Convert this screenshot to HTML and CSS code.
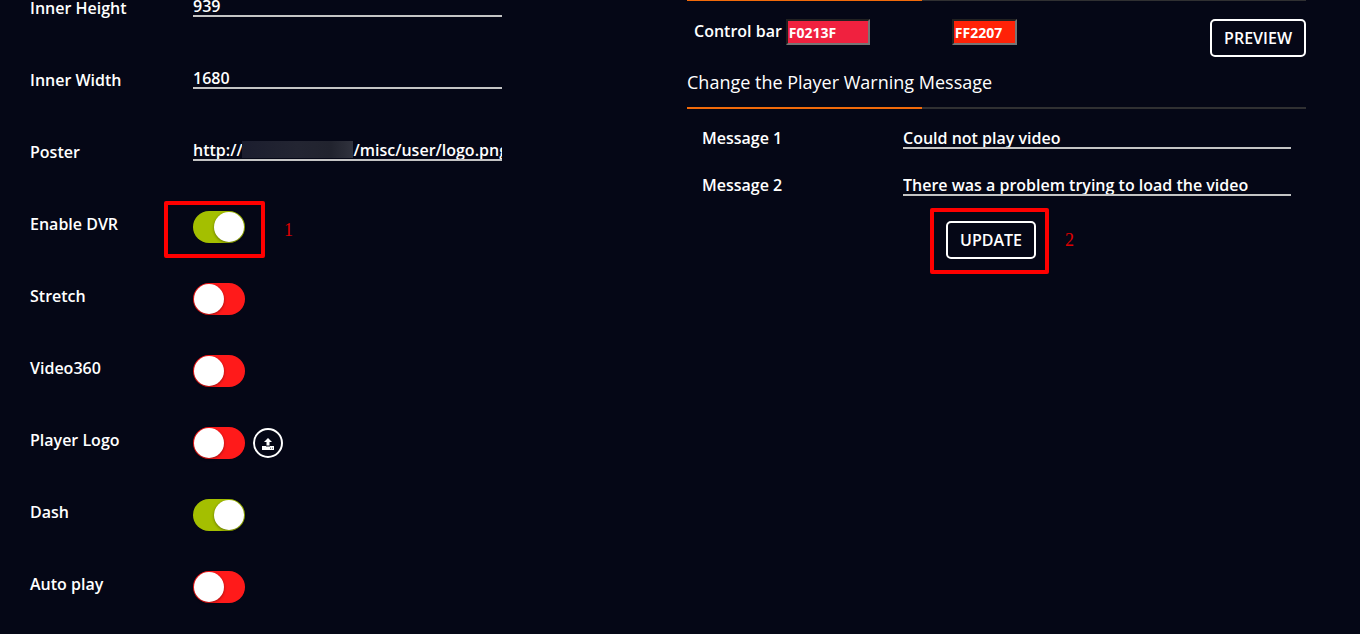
FILE: index.html
```html
<!DOCTYPE html>
<html lang="en">
<head>
    <meta charset="UTF-8">
    <meta name="viewport" content="width=device-width, initial-scale=1.0">
    <title>Player Settings</title>
    <link rel="stylesheet" href="styles.css">
</head>
<body>
    <main class="settings">
        <section class="player-options">
            <div class="option-row">
                <label for="inner-height">Inner Height</label>
                <input class="line-input" type="text" id="inner-height" value="939">
            </div>
            <div class="option-row">
                <label for="inner-width">Inner Width</label>
                <input class="line-input" type="text" id="inner-width" value="1680">
            </div>
            <div class="option-row">
                <label for="poster">Poster</label>
                <div class="poster-field">
                    <input class="line-input" type="text" id="poster" value="http://&nbsp;&nbsp;&nbsp;&nbsp;&nbsp;&nbsp;&nbsp;&nbsp;&nbsp;&nbsp;&nbsp;&nbsp;&nbsp;&nbsp;&nbsp;&nbsp;&nbsp;&nbsp;&nbsp;&nbsp;&nbsp;&nbsp;&nbsp;m/misc/user/logo.png">
                    <span class="masked-host"></span>
                </div>
            </div>
            <div class="option-row">
                <label for="enable-dvr">Enable DVR</label>
                <div class="marked">
                    <input class="switch" type="checkbox" id="enable-dvr" checked>
                    <span class="marker marker-dvr"></span>
                    <span class="step step-dvr">1</span>
                </div>
            </div>
            <div class="option-row">
                <label for="stretch">Stretch</label>
                <input class="switch" type="checkbox" id="stretch">
            </div>
            <div class="option-row">
                <label for="video360">Video360</label>
                <input class="switch" type="checkbox" id="video360">
            </div>
            <div class="option-row">
                <label for="player-logo">Player Logo</label>
                <div class="logo-field">
                    <input class="switch" type="checkbox" id="player-logo">
                    <button type="button" class="upload-btn" aria-label="Upload logo">
                        <svg width="12" height="12" viewBox="0 0 12 12" fill="#fff">
                            <path d="M6 0 L10 4 H7.5 V7.4 H4.5 V4 H2 Z"/>
                            <path fill-rule="evenodd" d="M0 8 H4 V8.4 H8 V8 H12 V12 H0 Z M8 9.8 V10.6 H9 V9.8 Z M10 9.8 V10.6 H11 V9.8 Z"/>
                        </svg>
                    </button>
                </div>
            </div>
            <div class="option-row">
                <label for="dash">Dash</label>
                <input class="switch" type="checkbox" id="dash" checked>
            </div>
            <div class="option-row">
                <label for="auto-play">Auto play</label>
                <input class="switch" type="checkbox" id="auto-play">
            </div>
        </section>

        <section class="player-style">
            <div class="divider"></div>
            <div class="color-row">
                <label for="bar-color">Control bar</label>
                <input class="color-input bar-color" type="text" id="bar-color" value="F0213F">
                <input class="color-input hover-color" type="text" aria-label="Control bar second color" value="FF2207">
                <button type="button" class="btn preview-btn">PREVIEW</button>
            </div>

            <h2>Change the Player Warning Message</h2>
            <div class="divider"></div>

            <div class="message-row">
                <label for="message-1">Message 1</label>
                <input class="line-input" type="text" id="message-1" value="Could not play video">
            </div>
            <div class="message-row">
                <label for="message-2">Message 2</label>
                <input class="line-input" type="text" id="message-2" value="There was a problem trying to load the video">
            </div>
            <div class="actions">
                <div class="marked">
                    <button type="button" class="btn">UPDATE</button>
                    <span class="marker marker-update"></span>
                    <span class="step step-update">2</span>
                </div>
            </div>
        </section>
    </main>
</body>
</html>
```

FILE: styles.css
```css
* {
    box-sizing: border-box;
}
body {
    margin: 0;
    background-color: #050716;
    color: #fff;
    font-family: "Open Sans", Arial, sans-serif;
    font-size: 16px;
    font-weight: 600;
    line-height: 24px;
    overflow: hidden;
}
input, button {
    margin: 0;
    font-family: inherit;
    font-size: 16px;
    font-weight: 600;
    color: #fff;
}
.settings {
    display: grid;
    grid-template-columns: 1fr 1fr;
}

/* left column */
.player-options {
    margin-top: -8px;
    padding: 0 178px 0 30px;
}
.option-row {
    display: grid;
    grid-template-columns: 163px 1fr;
    align-items: start;
    height: 72px;
    padding-top: 3px;
}
.option-row label {
    margin-top: 1px;
}
.line-input {
    display: block;
    width: 100%;
    height: 22px;
    padding: 2px 0 0;
    border: 0;
    border-bottom: 2px solid #c4c4c4;
    background: transparent;
}
.poster-field {
    position: relative;
}
.masked-host {
    position: absolute;
    left: 49px;
    top: 2px;
    width: 111px;
    height: 17px;
    background: linear-gradient(90deg, #1b1d2e, #232532 50%, #21232e 80%, #30323d);
}

/* on/off switch */
.switch {
    appearance: none;
    display: block;
    width: 52px;
    height: 32px;
    padding: 1px;
    border-radius: 16px;
    background-color: #ff1a1a;
}
.switch::before {
    content: "";
    display: block;
    width: 30px;
    height: 30px;
    border-radius: 50%;
    background-color: #fff;
    box-shadow: 0 1px 3px rgba(0, 0, 0, 0.4);
}
.switch:checked {
    background-color: #a4bf00;
}
.switch:checked::before {
    margin-left: 20px;
}
.logo-field {
    display: flex;
    align-items: center;
    gap: 8px;
}
.upload-btn {
    display: flex;
    align-items: center;
    justify-content: center;
    width: 30px;
    height: 30px;
    padding: 2px 0 0;
    border: 2px solid #fff;
    border-radius: 50%;
    background: transparent;
}

/* right column */
.player-style {
    margin-top: -1px;
    padding: 0 54px 0 7px;
}
.divider {
    height: 2px;
    background: linear-gradient(90deg, #f26a0a 38%, #303032 38%);
}
.color-row {
    display: flex;
    align-items: flex-start;
    padding: 18px 0 0 7px;
}
.color-input {
    height: 26px;
    padding: 1px;
    border: 2px inset #767676;
    font-size: 14px;
    font-weight: 700;
}
.bar-color {
    width: 84px;
    margin-left: 4px;
    background-color: #f0213f;
}
.hover-color {
    width: 65px;
    margin-left: 82px;
    background-color: #ff2207;
}
.btn {
    height: 38px;
    padding: 0 12px;
    border: 2px solid #fff;
    border-radius: 5px;
    background: transparent;
}
.preview-btn {
    margin-left: auto;
}
h2 {
    margin: 13px 0;
    font-size: 18px;
    font-weight: 400;
    line-height: 24px;
}
.message-row {
    display: grid;
    grid-template-columns: 201px 1fr;
    height: 47px;
    padding: 18px 15px 0;
}
.message-row label {
    line-height: 22px;
}
.actions {
    display: flex;
    justify-content: center;
    padding: 18px 11px 0 0;
}

/* step markers */
.marked {
    position: relative;
}
.marker {
    position: absolute;
    border: 4px solid #f00;
    border-radius: 2px;
    pointer-events: none;
}
.marker-dvr {
    left: -29px;
    top: -10px;
    width: 101px;
    height: 57px;
}
.marker-update {
    left: -16px;
    top: -13px;
    width: 119px;
    height: 66px;
}
.step {
    position: absolute;
    top: 7px;
    color: #e00000;
    font-family: "Liberation Serif", "Times New Roman", serif;
    font-size: 18px;
    font-weight: 400;
}
.step-dvr {
    left: 91px;
}
.step-update {
    left: 119px;
}
```
